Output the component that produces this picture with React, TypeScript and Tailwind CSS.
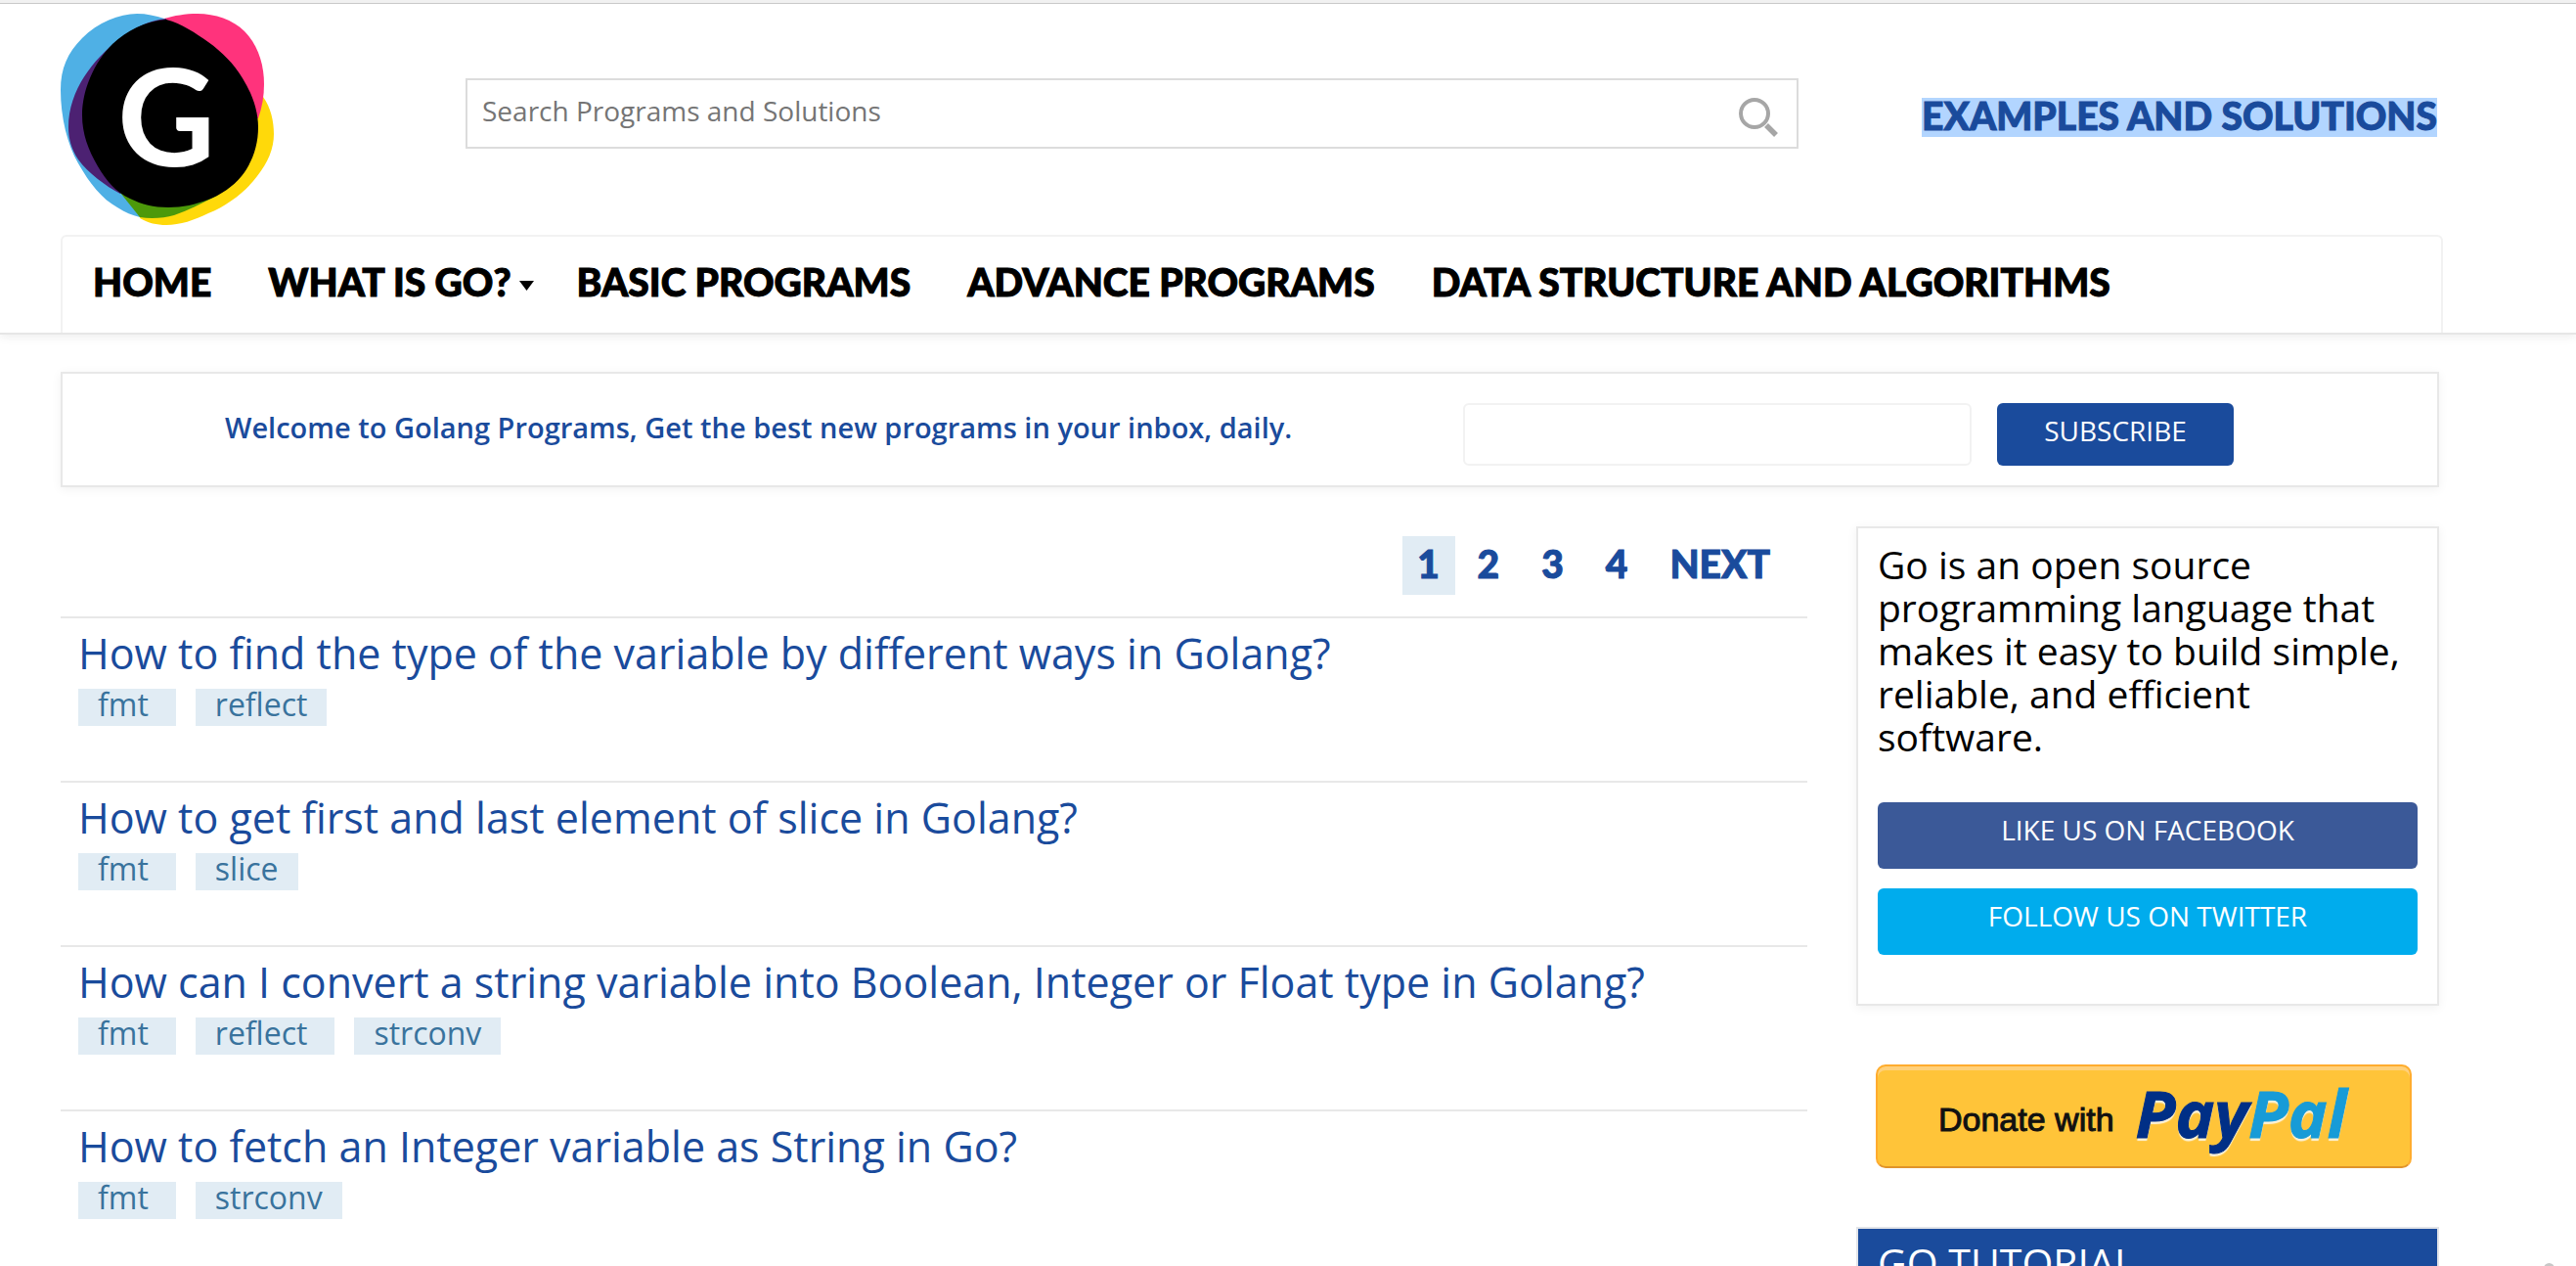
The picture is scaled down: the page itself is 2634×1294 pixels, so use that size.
import React from "react";

const SANS = "font-['Open_Sans','Noto_Sans',sans-serif]";

const questions = [
  { title: "How to find the type of the variable by different ways in Golang?", tags: ["fmt", "reflect"] },
  { title: "How to get first and last element of slice in Golang?", tags: ["fmt", "slice"] },
  { title: "How can I convert a string variable into Boolean, Integer or Float type in Golang?", tags: ["fmt", "reflect", "strconv"] },
  { title: "How to fetch an Integer variable as String in Go?", tags: ["fmt", "strconv"] },
];

const navItems = [
  { label: "HOME" },
  { label: "WHAT IS GO?", menu: true },
  { label: "BASIC PROGRAMS" },
  { label: "ADVANCE PROGRAMS" },
  { label: "DATA STRUCTURE AND ALGORITHMS" },
];

function Logo() {
  return (
    <svg viewBox="0 0 218 216" className="h-[216px] w-[218px]" role="img" aria-label="Golang Programs">
      <path fill="#ffd90a" d="M207 85C215 96 218 110 218 123C218 138 212 152 201 166C190 181 171 196 151 204C137 211 122 216 108 216C98 216 90 214 81 209L100 100Z" />
      <path fill="#4fb0e5" d="M106 5C97 2 88 0 78 0C60 0 38 9 22 25C7 40 0 56 0 78C0 106 7 134 18 153C30 174 42 189 58 198C66 203 73 206 81 208L120 120Z" />
      <path fill="#4c990a" d="M61 183L81 208C92 210 106 209 116 206C130 201 144 194 160 186L120 150Z" />
      <path fill="#ff337c" d="M106 5C116 2 127 0 140 0C158 0 176 6 188 18C202 32 208 52 208 72C208 84 206 96 202 107L120 120Z" />
      <path fill="#4c2172" d="M108 5C90 7 74 15 60 26C34 46 8 78 8 116C8 128 11 138 18 149C28 163 46 176 61 184L120 120Z" />
      <path d="M108 6C124 10 138 20 151 29C165 39 177 51 186 66C196 82 202 99 202 116C202 135 196 152 185 166C176 177 164 185 151 190C138 195 125 198 110 198C95 198 83 195 71 189C56 182 47 171 38 156C28 139 22 122 22 104C22 78 34 50 53 31C68 17 86 8 108 6Z" />
      <text x="58" y="156" fill="#fff" fontSize="138" fontWeight="700" fontFamily="Lato, sans-serif">G</text>
    </svg>
  );
}

function Header() {
  return (
    <header className="border-b-2 border-[#e6e6e6] shadow-[0_2px_10px_rgba(0,0,0,0.08)]">
      <div className="h-1 border-b border-[#c9c9c9] bg-[#f1f1f1]" />
      <div className="mr-[140px] ml-[62px] flex items-start pt-2.5">
        <a href="#home" className="shrink-0">
          <Logo />
        </a>
        <form className="mt-[66px] ml-[196px] flex h-[72px] flex-1 items-center border-2 border-[#dcdcdc] pr-[18px] pl-[15px]">
          <input
            aria-label="Search Programs and Solutions"
            placeholder="Search Programs and Solutions"
            className={`${SANS} min-w-0 flex-1 pb-1.5 text-[28px] leading-9 text-black outline-none placeholder:text-[#757575]`}
          />
          <button type="button" aria-label="Search" className="pt-1.5">
            <svg viewBox="0 0 44 44" className="size-11" fill="none" stroke="#a6a6a6">
              <circle cx="19" cy="19" r="14" strokeWidth="4" />
              <path d="M31 31L41 41" strokeWidth="5.5" />
            </svg>
          </button>
        </form>
        <p className="mt-[86px] mr-0.5 ml-[126px] h-10 shrink-0 bg-[#b2d5ff] text-[39px] leading-9 font-black text-[#1a4b9c] [-webkit-text-stroke:1px_#1a4b9c]">
          EXAMPLES AND SOLUTIONS
        </p>
      </div>
      <nav className="mt-2.5 mr-[136px] ml-[62px] flex h-[100px] rounded-t-md border-x-2 border-t-2 border-[#f2f2f2] pl-0.5">
        {navItems.map((item) => (
          <a
            key={item.label}
            href="#nav"
            className="flex px-[29px] pt-[22px] text-[39px] leading-[48px] font-black text-black [-webkit-text-stroke:1px_#000]"
          >
            {item.label}
            {item.menu && (
              <svg viewBox="0 0 15 10" className="mt-[23px] -mr-3.5 ml-2 h-2.5 w-[15px]">
                <path d="M0 0H15L7.5 10Z" />
              </svg>
            )}
          </a>
        ))}
      </nav>
    </header>
  );
}

function Subscribe() {
  return (
    <form className="flex h-[118px] items-start border-2 border-[#e8e8e8] pt-[30px] shadow-[0_2px_10px_rgba(0,0,0,0.06)]">
      <label htmlFor="email" className={`${SANS} ml-[166px] flex-1 text-[29px] leading-[50px] font-semibold text-[#1a4b9c]`}>
        Welcome to Golang Programs, Get the best new programs in your inbox, daily.
      </label>
      <input id="email" type="email" className="h-16 w-[520px] rounded-md border-2 border-[#f2f2f2] px-3 text-[28px] outline-none" />
      <button type="button" className={`${SANS} mr-52 ml-[26px] h-16 w-[242px] rounded-md bg-[#1a4b9c] pb-2 text-[28px] text-white`}>
        SUBSCRIBE
      </button>
    </form>
  );
}

function Pagination() {
  return (
    <nav
      aria-label="Pages"
      className="mr-[18px] flex h-[60px] justify-end gap-[3px] text-[39px] leading-[56px] font-black text-[#1a4b9c] [-webkit-text-stroke:1px_#1a4b9c]"
    >
      <a href="#p1" aria-current="page" className="w-[54px] bg-[#e1ecf4] text-center">1</a>
      <a href="#p2" className="px-5">2</a>
      <a href="#p3" className="px-5">3</a>
      <a href="#p4" className="px-5">4</a>
      <a href="#next" className="px-5">NEXT</a>
    </nav>
  );
}

function Sidebar() {
  return (
    <aside className={`${SANS} w-[596px] shrink-0`}>
      <section className="h-[490px] border-2 border-[#e8e8e8] px-5 pt-[15px] shadow-[0_2px_10px_rgba(0,0,0,0.06)]">
        <p className="text-[39px] leading-[44px] text-black">
          Go is an open source programming language that makes it easy to build simple, reliable, and efficient software.
        </p>
        <a href="#facebook" className="mt-[45px] block h-[68px] rounded-md bg-[#3b5998] text-center text-[28px] leading-[56px] text-white">
          LIKE US ON FACEBOOK
        </a>
        <a href="#twitter" className="mt-5 block h-[68px] rounded-md bg-[#00aced] text-center text-[28px] leading-[56px] text-white">
          FOLLOW US ON TWITTER
        </a>
      </section>
      <button
        type="button"
        className="mt-[60px] mr-7 ml-5 flex h-[106px] w-[548px] items-start rounded-[10px] border-2 border-[#ffac2e] border-b-[#e0942a] bg-[#ffc439] pl-[62px] shadow-[inset_0_4px_0_#ffd07a]"
      >
        <span className="font-['Liberation_Sans',Arial,sans-serif] text-[34px] leading-[108px] text-[#111] [-webkit-text-stroke:1px_#111]">
          Donate with
        </span>
        <span className="ml-[22px] text-[67px] leading-[94px] font-bold text-[#002f86] italic [-webkit-text-stroke:1px_currentColor] [text-shadow:0_3px_1px_#fdf3da]">
          Pay<span className="text-[#179bd7]">Pal</span>
        </span>
      </button>
      <h2 className="mt-[60px] h-24 border-2 border-[#e2e4e8] bg-[#1a4b9c] px-5 pt-1 text-[41px] leading-[60px] text-white">GO TUTORIAL</h2>
    </aside>
  );
}

export default function App() {
  return (
    <div className="h-screen overflow-hidden bg-white font-[Lato,sans-serif]">
      <Header />
      <div className="mt-[38px] mr-[140px] ml-[62px]">
        <Subscribe />
        <div className="mt-10 flex items-start gap-[50px]">
          <main className="min-w-0 flex-1 pt-2.5">
            <Pagination />
            <div className="mt-[22px]">
              {questions.map((q) => (
                <article key={q.title} className={`${SANS} h-[168px] border-t-2 border-[#e8e8e8] pl-[18px]`}>
                  <h3 className="h-[72px] pt-0.5 text-[43px] leading-[68px] whitespace-nowrap text-[#1a4b9c]">
                    <a href="#question">{q.title}</a>
                  </h3>
                  <div className="flex gap-5">
                    {q.tags.map((tag) => (
                      <a
                        key={tag}
                        href="#tag"
                        className="h-[38px] bg-[#e1ecf4] pr-7 pl-5 text-[32px] leading-8 text-[#39739d] last:pr-5"
                      >
                        {tag}
                      </a>
                    ))}
                  </div>
                </article>
              ))}
            </div>
          </main>
          <Sidebar />
        </div>
      </div>
      <div className="fixed right-[22px] -bottom-2 size-[11px] rounded-full bg-[#c8c8c8]" />
    </div>
  );
}
